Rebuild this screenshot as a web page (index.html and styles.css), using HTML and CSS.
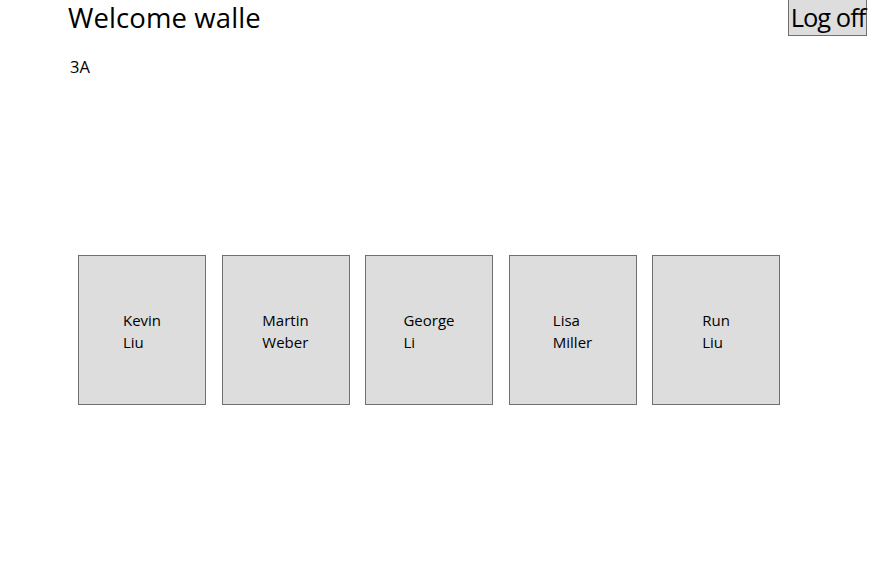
FILE: index.html
```html
<!DOCTYPE html>
<html lang="en">
<head>
<meta charset="utf-8">
<title>Welcome</title>
<link rel="stylesheet" href="styles.css">
</head>
<body>
<div class="page">
  <header class="top">
    <h1 class="welcome">Welcome walle</h1>
    <button class="logoff" type="button">Log off</button>
  </header>
  <div class="class-name">3A</div>
  <div class="tiles">
    <div class="tile"><div class="name">Kevin<br>Liu</div></div>
    <div class="tile"><div class="name">Martin<br>Weber</div></div>
    <div class="tile"><div class="name">George<br>Li</div></div>
    <div class="tile"><div class="name">Lisa<br>Miller</div></div>
    <div class="tile"><div class="name">Run<br>Liu</div></div>
  </div>
</div>
</body>
</html>
```

FILE: styles.css
```css
html, body {
  margin: 0;
  padding: 0;
  background: #ffffff;
}
body {
  font-family: "Open Sans", "Noto Sans", sans-serif;
  color: #000000;
  width: 874px;
  height: 582px;
  overflow: hidden;
}
.page {
  display: flex;
  flex-direction: column;
}
.top {
  display: flex;
  justify-content: space-between;
  align-items: flex-start;
  padding-left: 68px;
  padding-right: 7px;
}
.welcome {
  margin: 0;
  font-weight: normal;
  font-size: 27.5px;
  line-height: 36px;
  letter-spacing: 0.1px;
}
.logoff {
  margin: 0;
  font-family: inherit;
  font-size: 25.5px;
  letter-spacing: -1px;
  line-height: 33px;
  width: 79px;
  height: 36px;
  padding: 0 0 0 1px;
  background: #dddddd;
  border: 1px solid #707070;
  border-top: none;
  color: #000000;
  border-radius: 0;
  text-align: center;
  white-space: nowrap;
}
.class-name {
  margin-top: 20px;
  padding-left: 70px;
  font-size: 16.5px;
  line-height: 22px;
}
.tiles {
  display: flex;
  gap: 15.5px;
  margin-top: 177px;
  padding-left: 78px;
}
.tile {
  box-sizing: border-box;
  width: 128px;
  height: 150px;
  background: #dddddd;
  border: 1px solid #707070;
  display: flex;
  align-items: center;
  justify-content: center;
}
.name {
  font-size: 15px;
  line-height: 22px;
  text-align: left;
  padding-top: 2px;
}
```
